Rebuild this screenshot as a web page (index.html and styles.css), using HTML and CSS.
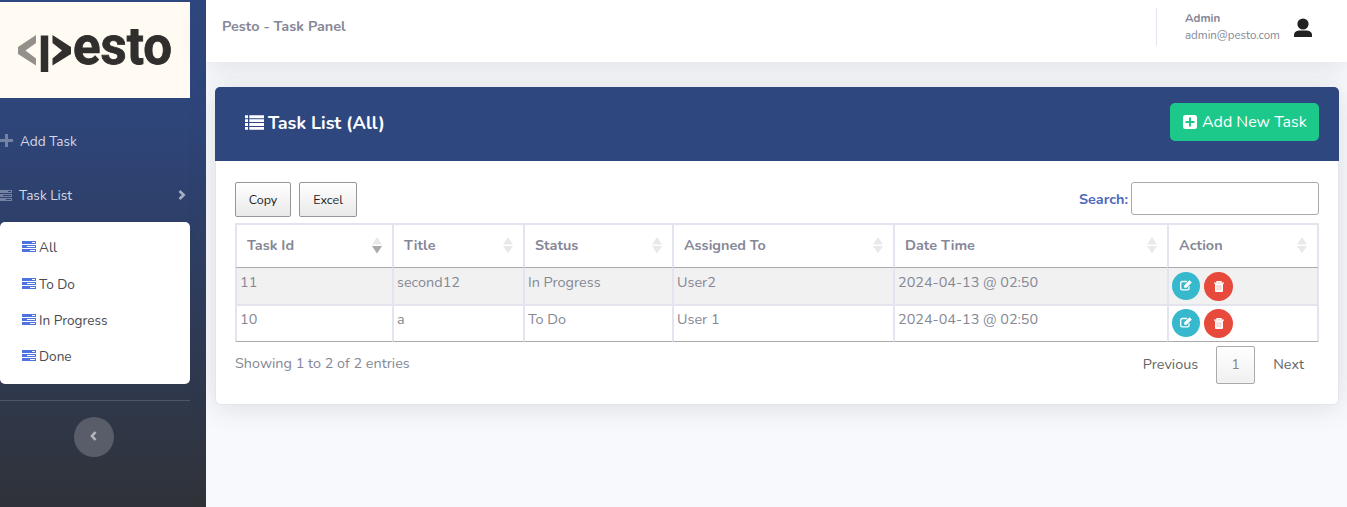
FILE: index.html
```html
<!DOCTYPE html>
<html lang="en">
<head>
<meta charset="utf-8">
<title>Pesto - Task Panel</title>
<link rel="stylesheet" href="styles.css">
</head>
<body>
<svg class="defs" width="0" height="0">
  <symbol id="tasks" viewBox="0 0 14 11"><path fill-rule="evenodd" fill="currentColor" d="M0 0h14v3H0zM10 1v1h3V1zM0 4h14v3H0zM5 5v1h8V5zM0 8h14v3H0zM8 9v1h5V9z"/></symbol>
  <symbol id="edit" viewBox="0 0 12 11"><path d="M9 6.2V8.6Q9 9.900 7.600 9.900H2.100Q.7 9.900 .7 8.600V2.900Q.7 1.500 2.100 1.500H7" fill="none" stroke="currentColor" stroke-width="1.300"/><path d="M4.200 7.700V5.500L9.400.3 11.800 2.600 6.500 7.700z" fill="currentColor"/></symbol>
  <symbol id="trash" viewBox="0 0 10 11"><path d="M0 2.200H10M3 2V.7H7V2" fill="none" stroke="currentColor" stroke-width="1.300"/><path fill="currentColor" d="M1 2.500h8V10q0 1-1 1H2q-1 0-1-1z"/><path d="M3.200 4v5.300M5 4v5.300M6.800 4v5.300" stroke="#e74a3b" stroke-opacity=".6" stroke-width=".6"/></symbol>
  <symbol id="sort" viewBox="0 0 10 17"><path class="up" d="M5 0l5 7.5H0z"/><path class="down" d="M0 9h10l-5 7.5z"/></symbol>
</svg>
<div class="app">
  <aside class="sidebar">
    <div class="logo">
      <svg width="190" height="96" viewBox="0 0 190 96">
        <path d="M36 33V41L25.500 48.500 36 56.500V63.500L18 52V45z" fill="#938f8b"/>
        <path d="M44.500 33.500V70" stroke="#302f2d" stroke-width="7.500"/>
        <path d="M52.500 33V41L62 48.500 52.500 56.500V63.500L71 52V45z" fill="#302f2d"/>
        <text class="logo-text" x="73" y="61.500" textLength="99" lengthAdjust="spacingAndGlyphs">esto</text>
      </svg>
    </div>
    <a class="nav add"><svg class="plus" width="13" height="13" viewBox="0 0 13 13"><path d="M6.5 0v13M0 6.5h13" stroke="currentColor" stroke-width="3"/></svg><span>Add Task</span></a>
    <a class="nav list"><svg width="14" height="11"><use href="#tasks"/></svg><span>Task List</span><svg class="chevron" width="8" height="10" viewBox="0 0 8 10"><path d="M1.5 1L5.7 5 1.5 9" fill="none" stroke="currentColor" stroke-width="2.6"/></svg></a>
    <div class="submenu">
      <a><svg width="14" height="11"><use href="#tasks"/></svg><span>All</span></a>
      <a><svg width="14" height="11"><use href="#tasks"/></svg><span>To Do</span></a>
      <a><svg width="14" height="11"><use href="#tasks"/></svg><span>In Progress</span></a>
      <a><svg width="14" height="11"><use href="#tasks"/></svg><span>Done</span></a>
    </div>
    <hr class="divider">
    <button class="toggle"><svg width="8" height="10" viewBox="0 0 8 10"><path d="M6.500 1L3 5 6.500 9" fill="none" stroke="currentColor" stroke-width="2.600"/></svg></button>
  </aside>
  <main class="content">
    <header class="topbar">
      <div class="brand">Pesto - Task Panel</div>
      <div class="user">
        <div class="who"><b>Admin</b><span>admin@pesto.com</span></div>
        <svg width="18" height="19" viewBox="0 0 18 19"><circle cx="9" cy="6" r="5.6"/><path d="M0 19V17q0-4 5-4.5h8q5 .5 5 4.500V19z"/></svg>
      </div>
    </header>
    <section class="card">
      <div class="card-head">
        <h1><svg width="19" height="15" viewBox="0 0 19 15"><path d="M0 1.700h3M4.300 1.700H19M0 5.600h3M4.300 5.600H19M0 9.500h3M4.300 9.500H19M0 13.400h3M4.300 13.400H19" stroke="currentColor" stroke-width="2.900"/></svg><span>Task List (All)</span></h1>
        <a class="new"><svg width="14" height="14" viewBox="0 0 14 14"><rect width="14" height="14" rx="2.500" fill="#fff"/><path d="M7 2.500v9M2.500 7h9" stroke="#1cc88a" stroke-width="2"/></svg><span>Add New Task</span></a>
      </div>
      <div class="card-body">
        <div class="tools">
          <button class="btn copy">Copy</button><button class="btn excel">Excel</button>
          <label class="search"><span>Search:</span><input type="text"></label>
        </div>
        <table>
          <colgroup><col class="c1"><col class="c2"><col class="c3"><col class="c4"><col class="c5"><col class="c6"></colgroup>
          <thead><tr>
            <th><div class="th desc"><span>Task Id</span><svg width="10" height="17"><use href="#sort"/></svg></div></th>
            <th><div class="th"><span>Title</span><svg width="10" height="17"><use href="#sort"/></svg></div></th>
            <th><div class="th"><span>Status</span><svg width="10" height="17"><use href="#sort"/></svg></div></th>
            <th><div class="th"><span>Assigned To</span><svg width="10" height="17"><use href="#sort"/></svg></div></th>
            <th><div class="th"><span>Date Time</span><svg width="10" height="17"><use href="#sort"/></svg></div></th>
            <th><div class="th"><span>Action</span><svg width="10" height="17"><use href="#sort"/></svg></div></th>
          </tr></thead>
          <tbody>
            <tr class="odd"><td>11</td><td>second12</td><td>In Progress</td><td>User2</td><td>2024-04-13 @ 02:50</td><td><div class="acts"><a class="edit"><svg width="12" height="11"><use href="#edit"/></svg></a><a class="del"><svg width="10" height="11"><use href="#trash"/></svg></a></div></td></tr>
            <tr class="even"><td>10</td><td>a</td><td>To Do</td><td>User 1</td><td>2024-04-13 @ 02:50</td><td><div class="acts"><a class="edit"><svg width="12" height="11"><use href="#edit"/></svg></a><a class="del"><svg width="10" height="11"><use href="#trash"/></svg></a></div></td></tr>
          </tbody>
        </table>
        <div class="foot">
          <div class="info">Showing 1 to 2 of 2 entries</div>
          <div class="pager"><span class="prev">Previous</span><span class="page">1</span><span class="next">Next</span></div>
        </div>
      </div>
    </section>
  </main>
</div>
</body>
</html>
```

FILE: styles.css
```css
* { box-sizing: border-box; }
body { margin: 0; font-family: Nunito, Lato, sans-serif; font-size: 14.4px; color: #858796; background: #f8f9fc; overflow: hidden; }
svg { display: block; flex: none; }
.defs { position: absolute; }
.app { display: flex; height: 507px; }

.sidebar { width: 206px; flex: none; padding: 2px 16px 0 0; background: linear-gradient(180deg, #2e477f 0%, #2e457a 24%, #2f3238 100%); display: flex; flex-direction: column; }
.logo { height: 96px; background: #fffbf3; }
.logo-text { font-family: Roboto, sans-serif; font-weight: 700; font-size: 51px; fill: #302f2d; stroke: #302f2d; stroke-width: .8px; }
.nav { display: flex; align-items: center; color: #d5dae5; font-size: 13.6px; height: 54px; }
.nav svg { color: #7482a4; }
.nav.add { margin-top: 16px; }
.nav.add svg { margin-top: -1px; }
.nav.add span { margin-left: 7px; }
.nav.list svg:first-child { margin-left: -2px; }
.nav.list span { margin-left: 7px; }
.nav .chevron { margin: 0 4px 0 auto; color: #a7afc2; }
.submenu { height: 162px; background: #fff; border-radius: 5px; padding: 7.5px 0 0 22px; font-size: 13.6px; color: #4a4b52; }
.submenu a { display: flex; align-items: center; gap: 3px; height: 36.4px; }
.submenu svg { color: #4e73df; margin-top: -2px; }
.divider { width: 100%; height: 1px; border: 0; margin: 16px 0; background: #505666; }
.toggle { width: 40px; height: 40px; border: 0; border-radius: 50%; background: #595d69; color: #b4b7bd; margin-left: 74px; padding: 0 0 2px 15px; }

.content { flex: 1; min-width: 0; }
.topbar { position: relative; height: 62px; background: #fff; display: flex; justify-content: space-between; align-items: flex-start; box-shadow: 0 2px 28px rgba(58,59,69,.15); padding: 8px 35px 0 16px; }
.brand { font-weight: 700; font-size: 14.4px; line-height: 17px; margin-top: 10px; }
.user { height: 38px; border-left: 1px solid #e3e6f0; padding-left: 28px; display: flex; align-items: center; }
.user svg { fill: #212121; margin-left: 14px; }
.who { width: 95px; display: flex; flex-direction: column; font-size: 11.5px; line-height: 17px; white-space: nowrap; }

.card { position: relative; margin: 25px 8px 0 9px; height: 318px; border: 1px solid #e3e6f0; border-radius: 6px; background: #fff; box-shadow: 0 2px 28px rgba(58,59,69,.15); }
.card-head { height: 74px; margin: -1px -1px 0; border-radius: 5px 5px 0 0; background: #2e477f; color: #fff; display: flex; justify-content: space-between; align-items: center; padding: 0 20px 2px 30px; }
h1 { margin: 0; display: flex; align-items: center; gap: 4px; font-size: 18px; line-height: 22px; }
h1 svg { margin-top: -2px; }
.new { width: 149px; height: 38px; margin-top: -2px; border-radius: 5px; background: #1cc88a; display: flex; align-items: center; padding-left: 13px; gap: 5px; font-size: 16px; white-space: nowrap; }
.card-body { padding: 21px 19px 0; }
.tools { display: flex; height: 41px; align-items: flex-start; }
.btn { height: 35px; border: 1px solid #979797; border-radius: 2px; background: linear-gradient(#fff, #e9e9e9); font-family: inherit; font-size: 12.5px; color: #222; padding: 0; }
.copy { width: 56px; margin-right: 8px; }
.excel { width: 58px; }
.search { margin-left: auto; display: flex; align-items: center; font-weight: 700; font-size: 14.4px; color: #4e69bd; gap: 3px; }
.search input { width: 188px; height: 33px; border: 1px solid #aaa; border-radius: 3px; background: #fff; }

table { width: 1084px; table-layout: fixed; border-collapse: separate; border-spacing: 0; }
.c1 { width: 157px; } .c2 { width: 131px; } .c3 { width: 149px; } .c4 { width: 221px; } .c5 { width: 274px; } .c6 { width: 152px; }
th, td { padding: 0; border-left: 2px solid #e3e4ee; text-align: left; }
th:last-child, td:last-child { border-right: 2px solid #e3e4ee; }
th { height: 45px; border-top: 2px solid #e3e4ee; border-bottom: 1px solid #aaa; padding-bottom: 2px; }
.th { display: flex; justify-content: space-between; align-items: center; padding: 0 10px; }
.th svg { margin-top: 1px; }
.up, .down { fill: #e9e9ec; }
.desc { --down: #a9a9ae; }
.down { fill: var(--down, #e9e9ec); }
td { height: 38px; padding: 5px 3px 0; vertical-align: top; line-height: 19px; border-bottom: 2px solid #e3e4ee; }
.odd td { background: #f1f1f1; }
.even td { height: 36px; padding-top: 4px; border-bottom: 1px solid #aaa; }
.acts { display: flex; gap: 4px; margin-top: -1px; height: 29px; }
.acts a { width: 28px; height: 28px; border-radius: 50%; background: #36b9cc; color: #fff; display: flex; align-items: center; justify-content: center; padding-bottom: 1px; }
.acts .del { width: 29px; height: 29px; background: #e74a3b; }
.foot { display: flex; justify-content: space-between; align-items: flex-start; padding-top: 4px; }
.info { line-height: 19px; margin-top: 8px; }
.pager { display: flex; align-items: center; height: 38px; color: #666; }
.prev, .next { margin-top: -2px; }
.prev { margin-right: 18px; }
.page { width: 39px; height: 38px; line-height: 35px; text-align: center; border: 1px solid #aaa; border-radius: 2px; background: linear-gradient(#fff, #f0f0f0); color: #888; }
.next { margin-left: 18px; margin-right: 15px; }
```
